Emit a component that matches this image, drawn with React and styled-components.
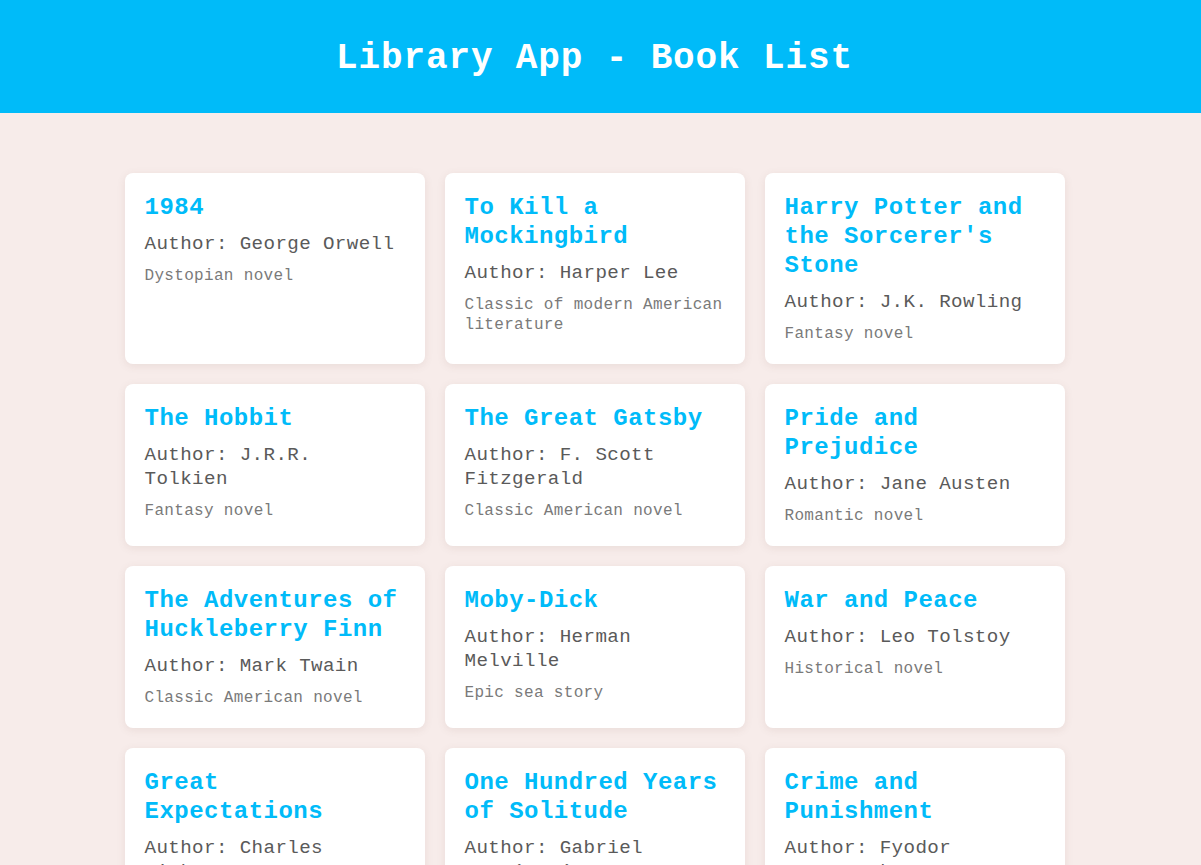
import React from "react";
import styled, { createGlobalStyle } from "styled-components";

const GlobalStyle = createGlobalStyle`
  html, body {
    margin: 0;
    padding: 0;
    background: #f7ecea;
    font-family: "Liberation Mono", "DejaVu Sans Mono", monospace;
  }
  * { box-sizing: border-box; }
`;

const books = [
  { title: "1984", author: "George Orwell", desc: "Dystopian novel" },
  { title: "To Kill a Mockingbird", author: "Harper Lee", desc: "Classic of modern American literature" },
  { title: "Harry Potter and the Sorcerer's Stone", author: "J.K. Rowling", desc: "Fantasy novel" },
  { title: "The Hobbit", author: "J.R.R. Tolkien", desc: "Fantasy novel" },
  { title: "The Great Gatsby", author: "F. Scott Fitzgerald", desc: "Classic American novel" },
  { title: "Pride and Prejudice", author: "Jane Austen", desc: "Romantic novel" },
  { title: "The Adventures of Huckleberry Finn", author: "Mark Twain", desc: "Classic American novel" },
  { title: "Moby-Dick", author: "Herman Melville", desc: "Epic sea story" },
  { title: "War and Peace", author: "Leo Tolstoy", desc: "Historical novel" },
  { title: "Great Expectations", author: "Charles Dickens", desc: "Classic English novel" },
  { title: "One Hundred Years of Solitude", author: "Gabriel García Márquez", desc: "Magical realism novel" },
  { title: "Crime and Punishment", author: "Fyodor Dostoevsky", desc: "Psychological novel" },
];

const Page = styled.div`
  min-height: 100vh;
  background: #f7ecea;
`;

const Header = styled.header`
  background: #00bbf9;
  padding: 32px 12px 28px 0;
  display: flex;
  justify-content: center;
`;

const Title = styled.h1`
  margin: 0;
  color: #ffffff;
  font-size: 36px;
  line-height: 53px;
  font-weight: 700;
  letter-spacing: 0.024em;
`;

const Main = styled.main`
  padding: 60px 32px 40px 20px;
  display: flex;
  justify-content: center;
`;

const Grid = styled.div`
  display: grid;
  grid-template-columns: repeat(3, 300px);
  gap: 20px;
  align-items: start;
`;

const Card = styled.article`
  background: #ffffff;
  border-radius: 8px;
  padding: 20px;
  box-shadow: 0 2px 8px rgba(120, 80, 70, 0.1);
  height: 100%;
`;

const BookTitle = styled.h2`
  margin: 0 0 10px;
  color: #00bbf9;
  font-size: 24px;
  line-height: 29px;
  font-weight: 700;
  letter-spacing: 0.02em;
`;

const Author = styled.p`
  margin: 0 0 10px;
  color: #5a5a5a;
  font-size: 19.2px;
  line-height: 24px;
  letter-spacing: 0.02em;
`;

const Desc = styled.p`
  margin: 0;
  color: #7a7a7a;
  font-size: 16px;
  line-height: 20px;
  letter-spacing: 0.02em;
`;

export default function App() {
  return (
    <Page>
      <GlobalStyle />
      <Header>
        <Title>Library App - Book List</Title>
      </Header>
      <Main>
        <Grid>
          {books.map((b) => (
            <Card key={b.title}>
              <BookTitle>{b.title}</BookTitle>
              <Author>Author: {b.author}</Author>
              <Desc>{b.desc}</Desc>
            </Card>
          ))}
        </Grid>
      </Main>
    </Page>
  );
}
